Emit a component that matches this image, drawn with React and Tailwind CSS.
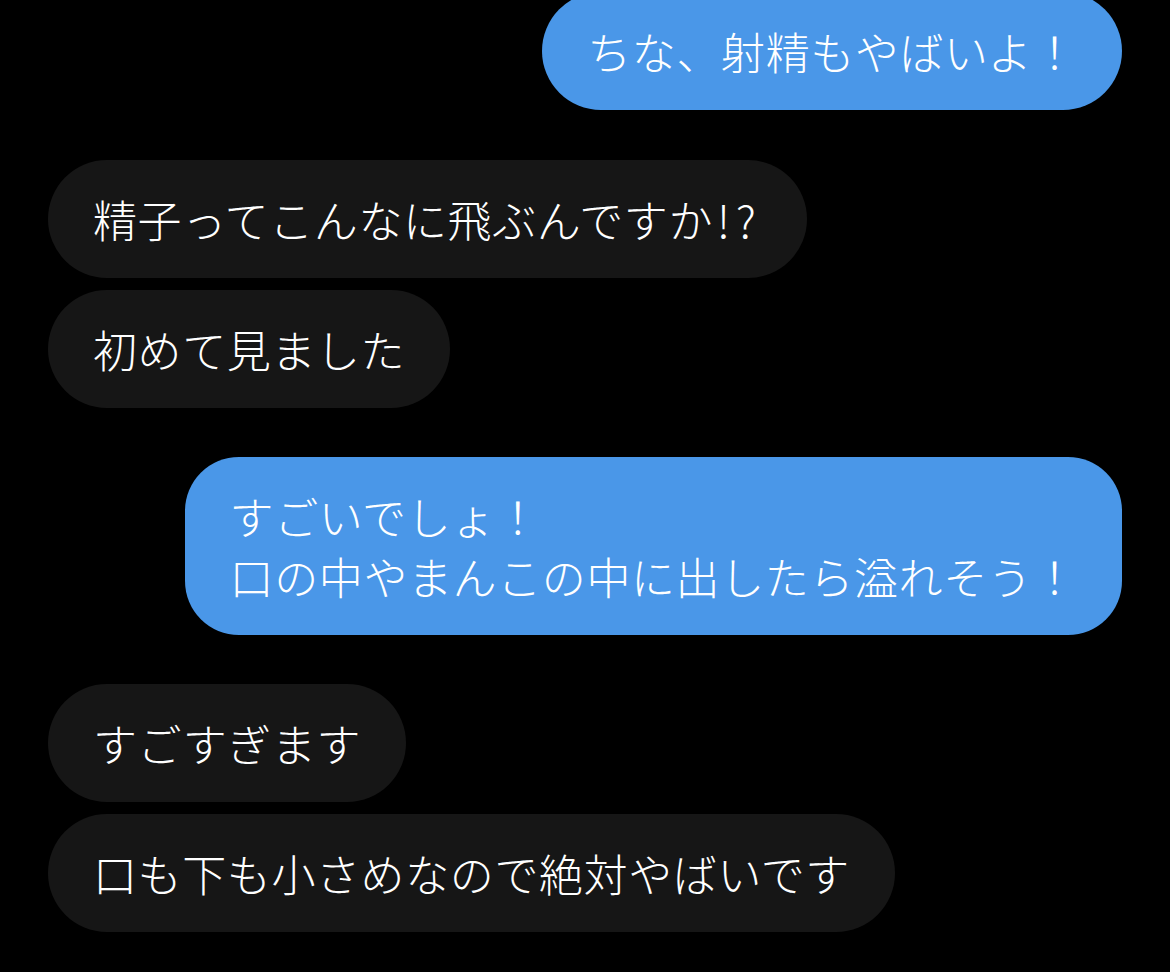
const messages = [
  { from: "me", lines: ["ちな、射精もやばいよ！"] },
  { from: "them", lines: [["精子ってこんなに飛ぶんですか", "!?"]], gap: "mt-[50px]" },
  { from: "them", lines: ["初めて見ました"], gap: "mt-[12px]" },
  { from: "me", lines: ["すごいでしょ！", "口の中やまんこの中に出したら溢れそう！"], gap: "mt-[49px]" },
  { from: "them", lines: ["すごすぎます"], gap: "mt-[49px]" },
  { from: "them", lines: ["口も下も小さめなので絶対やばいです"], gap: "mt-[12px]" },
]

function Bubble({ from, lines, gap = "" }) {
  const mine = from === "me"
  const shape = lines.length > 1 ? "rounded-[54px]" : "rounded-full"
  return (
    <div className={`flex ${mine ? "justify-end" : "justify-start"} ${gap}`}>
      <div
        className={`${shape} ${mine ? "bg-[#4a97e8]" : "bg-[#161616]"} px-[45px] py-[29px] text-[44px] font-light leading-[60px] tracking-[0.6px] text-white whitespace-nowrap`}
      >
        {lines.map((line, i) =>
          Array.isArray(line) ? (
            <div key={i}>
              {line[0]}
              <span className="ml-[4px] tracking-[6px]">{line[1]}</span>
            </div>
          ) : (
            <div key={i}>{line}</div>
          )
        )}
      </div>
    </div>
  )
}

export default function App() {
  return (
    <div
      className="h-[972px] w-[1170px] overflow-hidden bg-black px-[48px]"
      style={{ fontFamily: '"Noto Sans CJK JP", "Noto Sans", sans-serif' }}
    >
      <div className="-mt-[8px] flex flex-col">
        {messages.map((m, i) => (
          <Bubble key={i} {...m} />
        ))}
      </div>
    </div>
  )
}
